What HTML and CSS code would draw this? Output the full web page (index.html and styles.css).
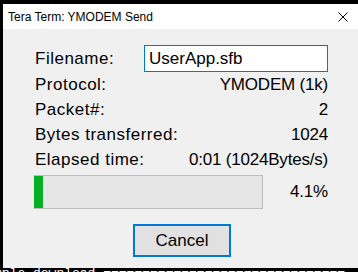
FILE: index.html
```html
<!DOCTYPE html>
<html>
<head>
<meta charset="utf-8">
<link rel="stylesheet" href="styles.css">
</head>
<body>
<div class="screen">
  <div class="window">
    <div class="titlebar">
      <span class="title">Tera Term: YMODEM Send</span>
      <svg class="close" width="10" height="10" viewBox="0 0 10 10"><path d="M0.5 0.5L9.5 9.5M9.5 0.5L0.5 9.5" stroke="#000" stroke-width="1" fill="none"/></svg>
    </div>
    <div class="content">
      <div class="row-file">
        <span class="label">Filename:</span>
        <div class="textbox">UserApp.sfb</div>
      </div>
      <div class="row"><span class="label">Protocol:</span><span class="value">YMODEM (1k)</span></div>
      <div class="row"><span class="label">Packet#:</span><span class="value">2</span></div>
      <div class="row"><span class="label">Bytes transferred:</span><span class="value">1024</span></div>
      <div class="row"><span class="label">Elapsed time:</span><span class="value">0:01 (1024Bytes/s)</span></div>
      <div class="row-progress">
        <div class="bar"><div class="fill"></div></div>
        <span class="value">4.1%</span>
      </div>
      <div class="btn-wrap"><button class="btn">Cancel</button></div>
    </div>
  </div>
  <div class="term-line">mple download ===============================</div>
</div>
</body>
</html>
```
FILE: styles.css
```css
html, body {
  margin: 0;
  padding: 0;
  background: #000;
}
.screen {
  width: 358px;
  height: 272px;
  overflow: hidden;
  background: #000;
}
.window {
  margin: 4px 0 0 3px;
  width: 355px;
  height: 264px;
  background: #f0f0f0;
  display: flex;
  flex-direction: column;
}
.titlebar {
  height: 25px;
  background: #fff;
  display: flex;
  align-items: center;
  justify-content: space-between;
  padding: 0 10px 0 5px;
  flex-shrink: 0;
}
.title {
  font-family: "Liberation Sans", Arial, sans-serif;
  font-size: 12px;
  color: #000;
}
.close {
  display: block;
  margin-top: 1px;
}
.content {
  padding: 16px 30px 0 31px;
  display: flex;
  flex-direction: column;
  font-family: "Liberation Sans", Arial, sans-serif;
  font-size: 17px;
  color: #000;
}
.label {
  padding-left: 1px;
  letter-spacing: 0.5px;
}
.value {
  letter-spacing: -0.2px;
}
.row-file {
  display: flex;
  justify-content: space-between;
  align-items: center;
  height: 27px;
}
.textbox {
  box-sizing: border-box;
  width: 184px;
  height: 27px;
  border: 1px solid #0078d7;
  background: #fff;
  padding-left: 4px;
  line-height: 25px;
}
.row {
  display: flex;
  justify-content: space-between;
  height: 25px;
  line-height: 25px;
}
.row-progress {
  margin-top: 3px;
  display: flex;
  justify-content: space-between;
  align-items: center;
  height: 34px;
}
.bar {
  box-sizing: border-box;
  width: 229px;
  height: 34px;
  background: #e6e6e6;
  border: 1px solid #bcbcbc;
}
.fill {
  width: 9px;
  height: 100%;
  background: #06b025;
  margin-left: -1px;
}
.btn-wrap {
  display: flex;
  justify-content: center;
  margin-top: 15px;
}
.btn {
  box-sizing: border-box;
  width: 98px;
  height: 33px;
  border: 2px solid #0078d7;
  background: #e1e1e1;
  font-family: "Liberation Sans", Arial, sans-serif;
  font-size: 17px;
  color: #000;
  padding: 0;
  margin-left: 2px;
}
.term-line {
  font-family: "Liberation Mono", monospace;
  font-size: 13px;
  line-height: 13px;
  color: #fff;
  white-space: pre;
  margin-left: -6px;
  margin-top: -1px;
}
```
